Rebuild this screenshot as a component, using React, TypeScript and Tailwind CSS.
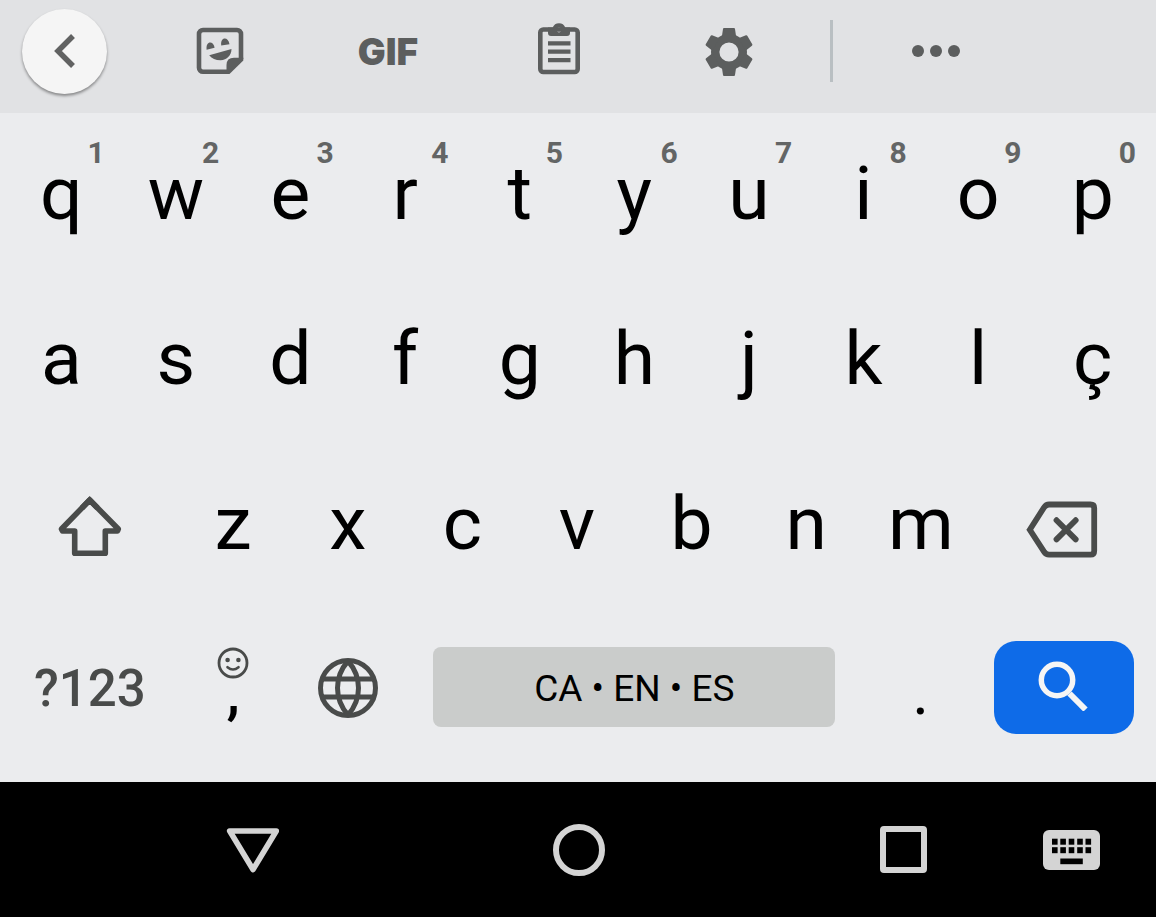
import React from "react";

interface LetterKeyProps {
  letter: string;
  hint?: string;
}

const topRow = ["q", "w", "e", "r", "t", "y", "u", "i", "o", "p"];
const middleRow = ["a", "s", "d", "f", "g", "h", "j", "k", "l", "ç"];
const bottomRow = ["z", "x", "c", "v", "b", "n", "m"];

const LetterKey: React.FC<LetterKeyProps> = ({ letter, hint }) => (
  <button
    type="button"
    className="relative col-span-2 flex items-center justify-center pb-1 text-[75px] leading-none text-black"
  >
    {letter}
    {hint && (
      <span className="absolute top-7 right-[14px] text-[30px] leading-6 font-bold text-[#636565]">
        {hint}
      </span>
    )}
  </button>
);

const StickerIcon = () => (
  <svg width="48" height="48" viewBox="0 0 48 48" fill="#5c5e5e" aria-hidden="true">
    <path
      d="M31 44.700H7a4 4 0 0 1-4-4V7a4 4 0 0 1 4-4h34a4 4 0 0 1 4 4v25"
      fill="none"
      stroke="#5c5e5e"
      strokeWidth="4.600"
    />
    <path d="M30.500 47V38q0-7.300 7.500-7.300H47.300V33.500L33.500 47Z" />
    <path d="M10.600 22.700C9.500 13.500 17.500 13.500 18.600 20.700Z" />
    <path d="M25.200 18.600C24 9.500 32.400 9.500 33.500 17.300Z" />
    <path d="M13.200 28.200 35.500 22C35.500 28 31 33.200 24.500 33.200 19.500 33.200 16 31.500 13.200 28.200Z" />
  </svg>
);

const ClipboardIcon = () => (
  <svg width="42" height="60" viewBox="0 0 42 60" fill="none" stroke="#5c5e5e" aria-hidden="true">
    <rect x="2.300" y="8.500" width="37.400" height="42.500" rx="3" strokeWidth="4.600" />
    <path
      fill="#5c5e5e"
      stroke="none"
      fillRule="evenodd"
      d="M10 6.500H14.700A6.800 6.800 0 0 1 27.300 6.500H32V12a3 3 0 0 1-3 3H13a3 3 0 0 1-3-3ZM21 6.600a2.400 2.400 0 1 0 0 4.800 2.400 2.400 0 0 0 0-4.800Z"
    />
    <path d="M10 22.300H32.500M10 30.700H32.500M10 39.200H32.500" strokeWidth="4.300" />
  </svg>
);

const GearIcon = () => (
  <svg width="50" height="50" viewBox="-25 -26 50 50" fill="#5c5e5e" aria-hidden="true">
    <circle r="13.800" fill="none" stroke="#5c5e5e" strokeWidth="8.400" />
    {[0, 60, 120, 180, 240, 300].map((angle) => (
      <path
        key={angle}
        d="M-5-24H5q.9 0 1 1L7.200-15H-7.200L-6-23q.1-1 1-1Z"
        transform={`rotate(${angle})`}
      />
    ))}
  </svg>
);

const ShiftIcon = () => (
  <svg
    width="64"
    height="67"
    viewBox="0 -5 64 67"
    fill="none"
    stroke="#494b4a"
    strokeWidth="5.600"
    aria-hidden="true"
  >
    <path
      strokeLinejoin="round"
      d="M31.700 5 3.500 34 4.500 36H16.700V58.300H47.300V36H59.500L60.300 34Z"
    />
    <path d="M24 13 31.700 5 39.500 13" />
  </svg>
);

const BackspaceIcon = () => (
  <svg
    width="76"
    height="73"
    viewBox="1 -13 76 73"
    fill="none"
    stroke="#494b4a"
    strokeWidth="5.800"
    aria-hidden="true"
  >
    <path d="M4.800 29.700 19 7.500Q21 4.500 24 4.500H65.500Q69.200 4.500 69.200 8V51Q69.200 54.700 65.500 54.700H24Q21 54.700 19 51.700Z" />
    <path strokeLinecap="round" d="M31.500 20.200 50.700 39.400M50.700 20.200 31.500 39.400" />
  </svg>
);

const SmileyIcon = () => (
  <svg width="32" height="32" viewBox="0 0 32 32" fill="none" stroke="#494b4a" aria-hidden="true">
    <circle cx="16" cy="16" r="14" strokeWidth="2.800" />
    <circle cx="10.600" cy="13" r="2.300" fill="#494b4a" stroke="none" />
    <circle cx="21.400" cy="13" r="2.300" fill="#494b4a" stroke="none" />
    <path d="M10.500 20.200Q16 24.800 21.500 20.200" strokeWidth="2.600" strokeLinecap="round" />
  </svg>
);

const GlobeIcon = () => (
  <svg
    width="60"
    height="60"
    viewBox="0 0 60 60"
    fill="none"
    stroke="#494b4a"
    strokeWidth="5"
    aria-hidden="true"
  >
    <circle cx="30" cy="30" r="27.500" />
    <path d="M4 21H56M4 39H56M30 3C16 19 16 41 30 57M30 3C44 19 44 41 30 57" />
  </svg>
);

const Toolbar = () => (
  <div
    role="toolbar"
    aria-label="Keyboard tools"
    className="grid h-[113px] grid-cols-[129fr_181fr_156fr_186fr_154fr_50fr_160fr_140fr] items-center justify-items-center bg-[#e1e2e4] pb-[11px]"
  >
    <button
      type="button"
      aria-label="Back"
      className="flex size-[85px] items-center justify-center rounded-full bg-[#f5f5f5] shadow-[0_2px_3px_rgba(0,0,0,0.4)]"
    >
      <svg width="24" height="36" viewBox="0 0 24 36" fill="none" aria-hidden="true">
        <path d="M20 3 5 18 20 33" stroke="#616262" strokeWidth="5.500" />
      </svg>
    </button>
    <button type="button" aria-label="Stickers">
      <StickerIcon />
    </button>
    <button
      type="button"
      className="font-[Inter,sans-serif] text-[37px] leading-none font-black text-[#5c5e5e]"
    >
      GIF
    </button>
    <button type="button" aria-label="Clipboard">
      <ClipboardIcon />
    </button>
    <button type="button" aria-label="Settings">
      <GearIcon />
    </button>
    <div className="h-[62px] w-[3px] bg-[#b9bfc2]" />
    <button type="button" aria-label="More">
      <svg width="48" height="12" viewBox="0 0 48 12" fill="#5c5e5e" aria-hidden="true">
        <circle cx="6" cy="6" r="6" />
        <circle cx="24" cy="6" r="6" />
        <circle cx="42" cy="6" r="6" />
      </svg>
    </button>
  </div>
);

const NavigationBar = () => (
  <nav
    aria-label="System navigation"
    className="grid min-h-[135px] flex-1 grid-cols-[168fr_170fr_481fr_168fr_169fr] items-center justify-items-center bg-black"
  >
    <button type="button" aria-label="Hide keyboard" className="col-start-2">
      <svg width="54" height="48" viewBox="0 0 54 48" fill="none" aria-hidden="true">
        <path
          d="M3.700 5H50.300L27 43.500Z"
          stroke="#d4d4d4"
          strokeWidth="5.600"
          strokeLinejoin="round"
        />
      </svg>
    </button>
    <button
      type="button"
      aria-label="Home"
      className="size-[52px] rounded-full border-6 border-[#d4d4d4]"
    />
    <button
      type="button"
      aria-label="Recent apps"
      className="size-[47px] rounded-[4px] border-6 border-[#d4d4d4]"
    />
    <button type="button" aria-label="Switch keyboard">
      <svg width="57" height="40" viewBox="0 0 57 40" aria-hidden="true">
        <rect width="57" height="40" rx="6" fill="#d4d4d4" />
        {[9, 17.300, 25.700, 34.200, 42.500].map((x) => (
          <React.Fragment key={x}>
            <rect x={x} y="8.700" width="5.600" height="6" />
            <rect x={x} y="17.200" width="5.600" height="6" />
          </React.Fragment>
        ))}
        <rect x="17.300" y="28.500" width="22.500" height="5.700" />
      </svg>
    </button>
  </nav>
);

export default function App() {
  return (
    <div className="flex min-h-screen flex-col bg-[#ebecee] font-[Roboto,sans-serif]">
      <Toolbar />

      {/* Every letter spans two of the twenty columns */}
      <main className="grid auto-rows-[165px] grid-cols-20 pr-1.5 pb-[9px] pl-1">
        {topRow.map((letter, index) => (
          <LetterKey key={letter} letter={letter} hint={String((index + 1) % 10)} />
        ))}
        {middleRow.map((letter) => (
          <LetterKey key={letter} letter={letter} />
        ))}

        <button
          type="button"
          aria-label="Shift"
          className="col-span-3 flex items-center justify-center pb-1"
        >
          <ShiftIcon />
        </button>
        {bottomRow.map((letter) => (
          <LetterKey key={letter} letter={letter} />
        ))}
        <button
          type="button"
          aria-label="Backspace"
          className="col-span-3 flex items-center justify-center pb-1"
        >
          <BackspaceIcon />
        </button>

        <button
          type="button"
          className="col-span-3 flex items-center justify-center pb-1 text-[51px] leading-none font-medium text-[#494b4a]"
        >
          ?123
        </button>
        <button
          type="button"
          className="relative col-span-2 flex items-center justify-center pt-1 text-[60px] leading-none font-medium text-black"
        >
          <span className="absolute inset-x-0 top-[39px] flex justify-center">
            <SmileyIcon />
          </span>
          ,
        </button>
        <button
          type="button"
          aria-label="Change language"
          className="col-span-2 flex items-center justify-center pb-1.5"
        >
          <GlobeIcon />
        </button>
        <div className="col-span-8 flex items-center px-7 pb-2">
          <button
            type="button"
            className="h-20 w-full rounded-lg bg-[#cacccb] pt-1 text-[37px] leading-none text-black"
          >
            CA • EN • ES
          </button>
        </div>
        <button
          type="button"
          className="col-span-2 flex items-center justify-center pt-1 text-[64px] leading-none text-black"
        >
          .
        </button>
        <div className="col-span-3 flex items-center justify-center pb-1.5">
          <button
            type="button"
            aria-label="Search"
            className="flex h-[93px] w-[140px] items-center justify-center rounded-[22px] bg-[#0e6be8] pr-0.5 pb-1"
          >
            <svg
              width="50"
              height="50"
              viewBox="0 0 50 50"
              fill="none"
              stroke="#f5f5f5"
              aria-hidden="true"
            >
              <circle cx="19" cy="19" r="15.700" strokeWidth="5.500" />
              <path d="M31.500 32.500 47.500 48.500" strokeWidth="6" />
            </svg>
          </button>
        </div>
      </main>

      <NavigationBar />
    </div>
  );
}
